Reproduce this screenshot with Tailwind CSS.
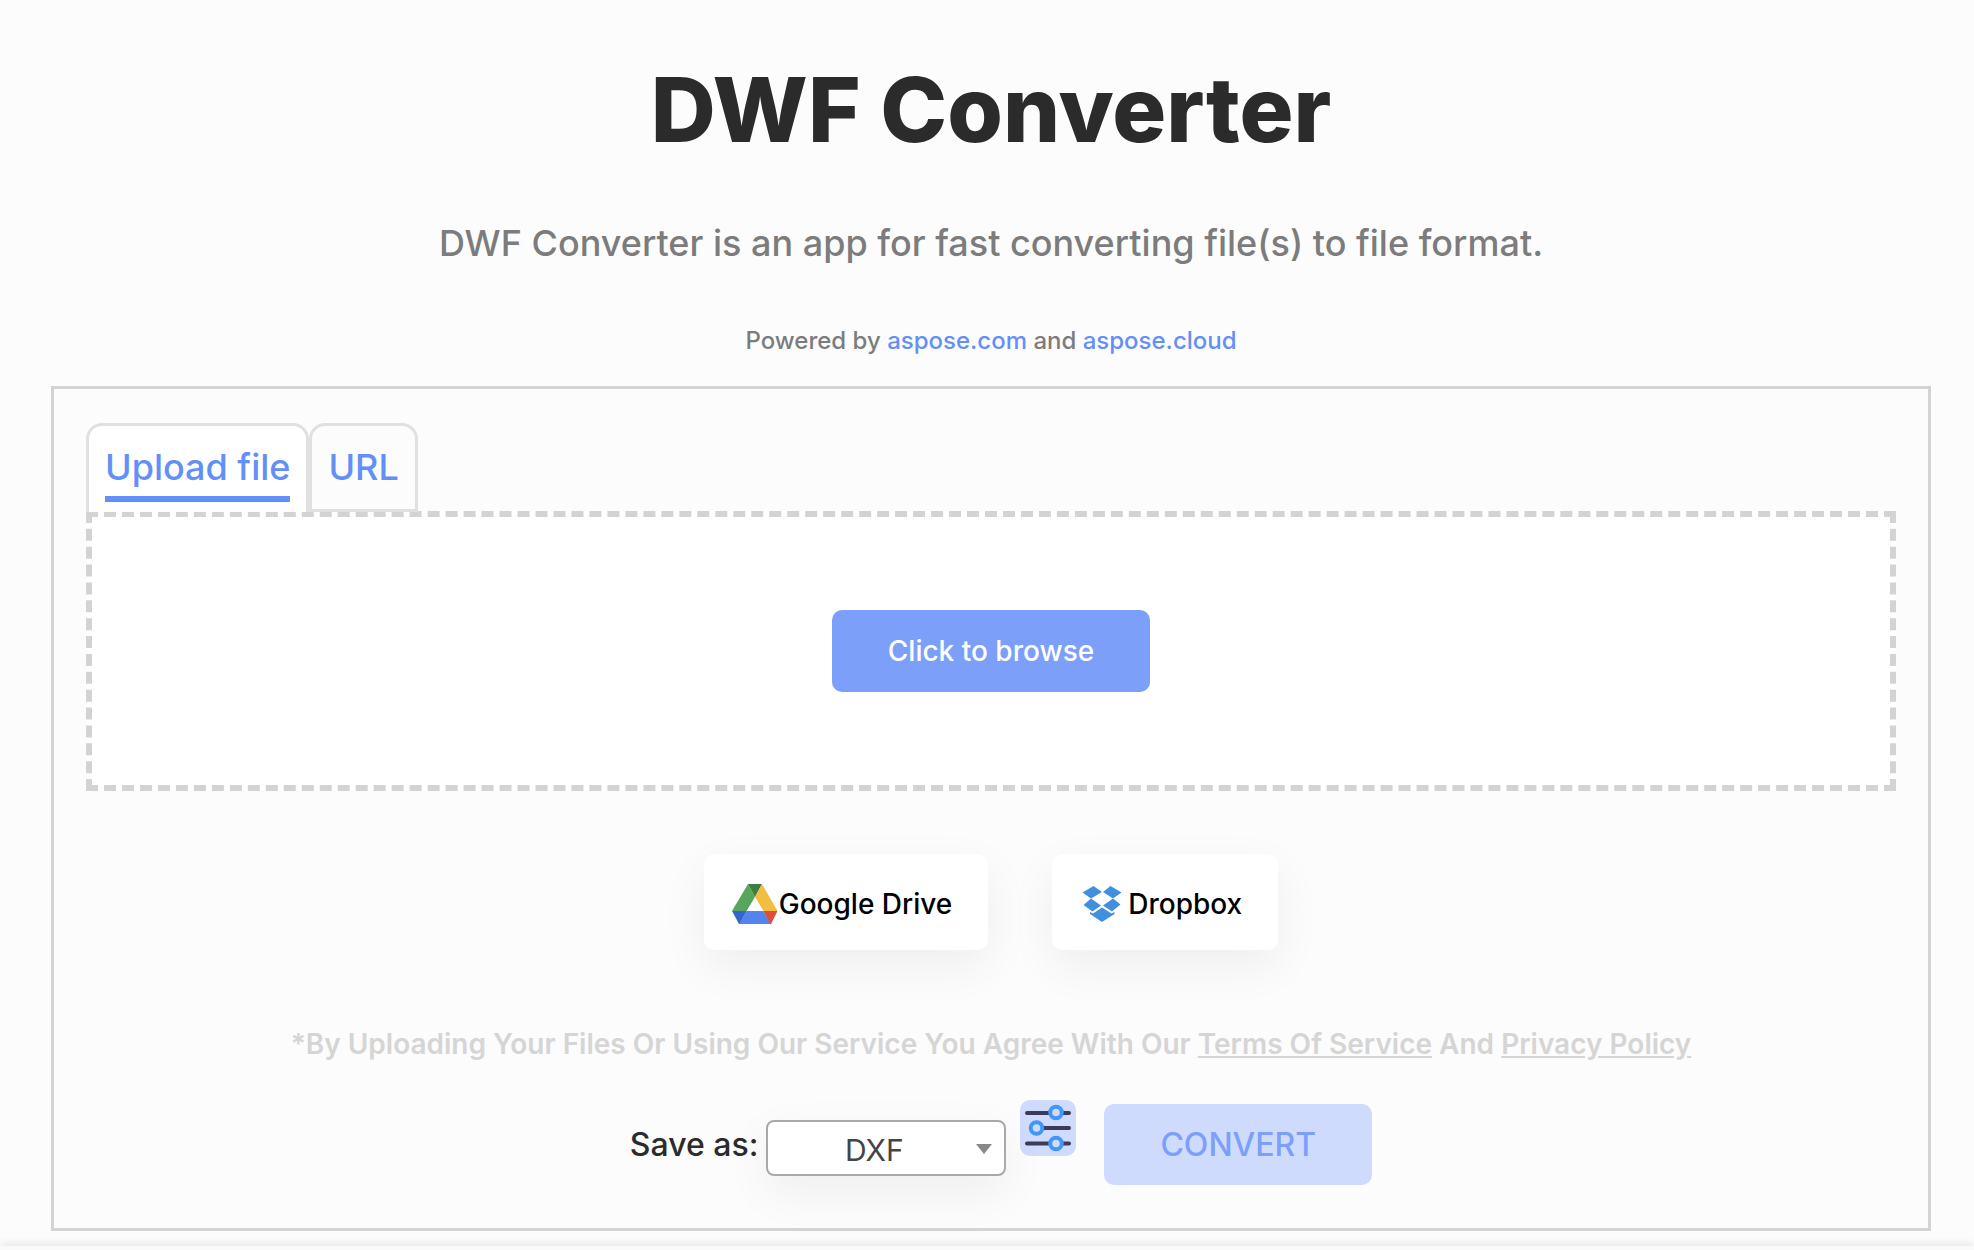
<!DOCTYPE html>
<html lang="en">
<head>
    <meta charset="UTF-8">
    <meta name="viewport" content="width=device-width, initial-scale=1.0">
    <title>DWF Converter</title>
    <script src="https://cdn.jsdelivr.net/npm/@tailwindcss/browser@4"></script>
</head>
<body class="bg-[#fcfcfc] font-['Inter',sans-serif] font-medium overflow-hidden">
    <div class="min-h-screen flex flex-col">
        <main class="pl-[51px] pr-[43px] pb-[15px]">
            <!-- Heading -->
            <header class="flex flex-col items-center text-center text-[#7c7c7c] pt-14">
                <h1 class="text-[90px] leading-[108px] font-extrabold text-[#2b2b2b]">DWF Converter</h1>
                <p class="mt-[55px] text-4xl leading-[48px]">DWF Converter is an app for fast converting file(s) to file format.</p>
                <p class="mt-[58px] text-2xl leading-[32px]">Powered by <a href="#" class="text-[#638ff9]">aspose.com</a> and <a href="#" class="text-[#638ff9]">aspose.cloud</a></p>
            </header>

            <!-- Converter Panel -->
            <section class="mt-[29px] border-3 border-[#d3d3d3] px-8 pt-[34px] pb-[43px]">
                <!-- Tabs -->
                <div class="flex text-4xl leading-[48px] text-[#638ff9]">
                    <button class="relative z-10 h-[89px] -mb-px px-4 pt-[17px] flex flex-col items-center bg-white border-3 border-b-0 border-[#e0e0e0] rounded-t-2xl">
                        <span class="pb-[5px] border-b-6 border-[#638ff9]">Upload file</span>
                    </button>
                    <button class="relative z-10 h-[89px] -mb-px px-4 pt-[17px] flex flex-col items-center border-3 border-[#e0e0e0] rounded-t-2xl">
                        <span>URL</span>
                    </button>
                </div>

                <!-- Drop Zone -->
                <div class="h-[280px] flex items-center justify-center bg-white border-6 border-dashed border-[#d3d3d3]">
                    <button class="h-[82px] px-14 rounded-[10px] bg-[#7c9ff9] text-white text-[28px]">Click to browse</button>
                </div>

                <!-- Cloud Storage -->
                <div class="mt-[63px] flex justify-center gap-16 text-[28px] text-black">
                    <button class="h-24 pt-1 pl-7 pr-9 flex items-center bg-white rounded-[10px] shadow-[0_16px_48px_rgba(0,0,0,0.06)]">
                        <svg class="w-[46px] h-[42px] mr-px" viewBox="0 0 46 42">
                            <path fill="#5aa55c" d="M16 1L0 28h14.500L23 14z"/>
                            <path fill="#3d7d41" d="M16 1h14l-7 13z"/>
                            <path fill="#f2be42" d="M30 1l15.500 27H31.500L23 14z"/>
                            <path fill="#3167cb" d="M0 28h14.500L8 41H7z"/>
                            <path fill="#5383ec" d="M14.500 28h17l7 13H7z"/>
                            <path fill="#da4f3d" d="M31.500 28h14L39 41h-1z"/>
                        </svg>
                        Google Drive
                    </button>
                    <button class="h-24 pt-1 pl-[30px] pr-9 flex items-center bg-white rounded-[10px] shadow-[0_16px_48px_rgba(0,0,0,0.06)]">
                        <svg class="w-10 h-9 mr-1.5" viewBox="0 0 40 36">
                            <path fill="#4190e0" d="M11.500 0L20 6 9 12.500 0.500 6.500zM28.500 0L39.500 6.500 31 12.500 21 6zM9 12.500L19 19.500 10.500 25.500 1.500 19zM31 12.500L38.500 18.500 30 25.500 21 19.500zM20 21.500L29.500 27.500 32.500 26v2L20 36 8 28v-2l3 1.500z"/>
                        </svg>
                        Dropbox
                    </button>
                </div>

                <p class="mt-[76px] text-center text-[28px] leading-[36px] font-semibold text-[#d5d5d5]">*By Uploading Your Files Or Using Our Service You Agree With Our <a href="#" class="underline">Terms Of Service</a> And <a href="#" class="underline">Privacy Policy</a></p>

                <!-- Save Options -->
                <div class="mt-[38px] flex items-start justify-center pl-5">
                    <label for="format" class="pt-[25px] text-[32px] leading-[40px] text-[#2b2b2b]">Save as:</label>
                    <div class="relative mt-5 ml-2">
                        <select id="format" class="appearance-none w-60 h-14 pt-1 pr-6 text-center text-[30px] font-normal text-[#444444] bg-white border-2 border-[#a9a9a9] rounded-lg shadow-[0_16px_48px_rgba(0,0,0,0.06)]">
                            <option>DXF</option>
                            <option>DWG</option>
                            <option>PDF</option>
                        </select>
                        <svg class="absolute right-3.5 top-6 w-4 h-2.5 pointer-events-none" viewBox="0 0 16 10">
                            <path fill="#888888" d="M0 0h16L8 10z"/>
                        </svg>
                    </div>
                    <button aria-label="Settings" class="ml-3.5 w-14 h-14 bg-[#cfdbfc] rounded-[10px]">
                        <svg class="w-14 h-14" viewBox="0 0 56 56" fill="none" stroke-width="4" stroke-linecap="round">
                            <path stroke="#3b3b58" d="M7 13h42M21 28h28M7 43.500h42"/>
                            <g stroke="#4096fa" fill="#cfdbfc">
                                <circle cx="36" cy="12.500" r="5.800"/>
                                <circle cx="16.500" cy="28" r="5.800"/>
                                <circle cx="36" cy="43.500" r="5.800"/>
                            </g>
                        </svg>
                    </button>
                    <button class="mt-1 ml-7 h-[81px] px-14 rounded-[10px] bg-[#cfdbfc] text-[#7c9ff9] text-[32px]">CONVERT</button>
                </div>
            </section>
        </main>
        <footer class="grow bg-[#fafafa] shadow-[0_0_10px_rgba(0,0,0,0.2)]"></footer>
    </div>
</body>
</html>
